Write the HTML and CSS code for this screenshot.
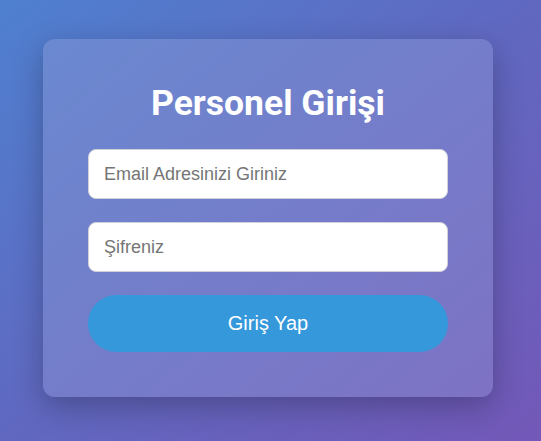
FILE: index.html
```html
<!DOCTYPE html>
<html lang="tr">
<head>
<meta charset="utf-8">
<title>Personel Girişi</title>
<link rel="stylesheet" href="styles.css">
</head>
<body>
<div class="page">
  <form class="card">
    <h1 class="title">Personel Girişi</h1>
    <input class="field" type="email" placeholder="Email Adresinizi Giriniz">
    <input class="field" type="password" placeholder="Şifreniz">
    <button class="btn" type="button">Giriş Yap</button>
  </form>
</div>
</body>
</html>
```
FILE: styles.css
```css
html, body {
  margin: 0;
  padding: 0;
  height: 100%;
}
body {
  background: linear-gradient(to bottom right, #4f80d0 0%, #6068c0 50%, #7358b8 100%);
  font-family: "Liberation Sans", Arial, sans-serif;
  overflow: hidden;
}
.page {
  min-height: 100vh;
  box-sizing: border-box;
  padding: 39px 0 0 43px;
  display: flex;
  align-items: flex-start;
}
.card {
  width: 450px;
  box-sizing: border-box;
  padding: 40px 45px 45px;
  border-radius: 12px;
  background: linear-gradient(to bottom right, #6a89d0 0%, #747dca 50%, #7e72c4 100%);
  box-shadow: 0 10px 30px rgba(0, 0, 0, 0.25);
  display: flex;
  flex-direction: column;
}
.title {
  margin: 0 0 22px;
  text-align: center;
  color: #fff;
  font-family: Roboto, sans-serif;
  font-weight: 700;
  font-size: 35.5px;
  line-height: 48px;
}
.field {
  height: 50px;
  box-sizing: border-box;
  margin: 0 0 23px;
  padding: 0 15px;
  border: 1px solid #d0d0d8;
  border-radius: 8px;
  background: #fff;
  font-family: "Liberation Sans", Arial, sans-serif;
  font-size: 18px;
  color: #333;
  outline: none;
}
.field::placeholder {
  color: #757575;
}
.btn {
  height: 57px;
  border: none;
  border-radius: 29px;
  background: #3498db;
  color: #fff;
  font-family: "Liberation Sans", Arial, sans-serif;
  font-size: 20px;
  cursor: pointer;
}
```
